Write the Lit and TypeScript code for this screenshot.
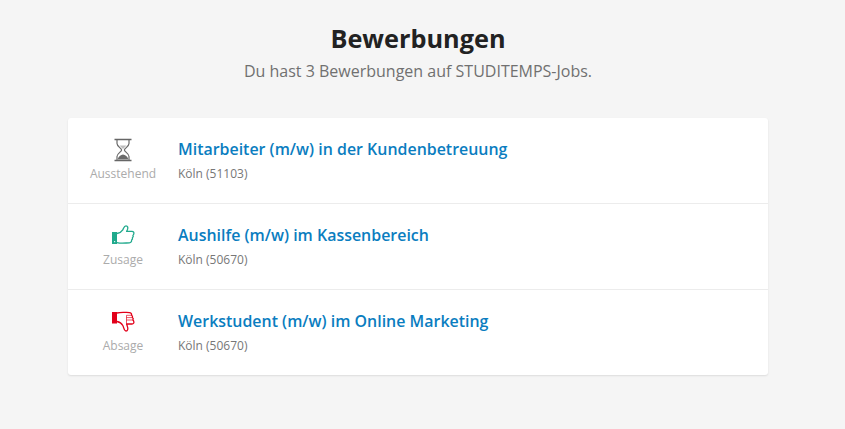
import { LitElement, html, css, svg } from "lit";
import { customElement } from "lit/decorators.js";

const hourglass = svg`<svg width="20" height="24" viewBox="0 0 20 24" fill="none">
  <path d="M1.5 1.5H18.5M1.5 22.5H18.5" stroke="#666" stroke-width="1.7"/>
  <path d="M4 2V5.5C4 8.5 8.6 10.2 8.6 12C8.6 13.8 4 15.5 4 18.5V22M16 2V5.5C16 8.5 11.4 10.2 11.4 12C11.4 13.8 16 15.5 16 18.5V22" stroke="#6a6a6a" stroke-width="1.2"/>
  <path d="M6.5 7.5H13.5L10 11Z" fill="#bdbdbd"/>
  <path d="M4.8 21.5C5 18.5 8 16.8 10 16.5C12 16.8 15 18.5 15.2 21.5Z" fill="#6a6a6a"/>
</svg>`;

const thumbUp = svg`<svg width="24" height="21" viewBox="0 0 24 21" fill="none">
  <rect x="1" y="7" width="5" height="12" fill="#1fa98c"/>
  <rect x="3" y="16" width="1.2" height="1.2" fill="#d5f0ea"/>
  <path d="M6 8.5C8.5 8 10.5 6.8 11.8 4.8C12.8 3.2 13 0.8 15 0.8C16.8 0.8 17.2 2.6 16.5 4.4L15.6 6.4H21C22.5 6.4 23.2 7.6 22.8 8.8C22.6 9.6 22.3 10 21.9 10.4C22.4 11.1 22.2 12.2 21.4 12.8C21.7 13.6 21.4 14.6 20.6 15.1C20.8 16.4 20 17.8 18.4 17.8C15 17.8 11 18.8 6 17.6" stroke="#1fa98c" stroke-width="1.3" stroke-linejoin="round"/>
</svg>`;

const thumbDown = svg`<svg width="24" height="21" viewBox="0 0 24 21" fill="none">
  <rect x="1" y="1" width="5" height="11.5" fill="#e2001a"/>
  <path d="M6 10.5C8.5 11 10.5 12.2 11.8 14.5C12.8 16.2 13 20 15 20C16.8 20 17.2 17.6 16.5 15.8L15.6 13H21C22.5 13 23.2 11.8 22.8 10.6C22.6 9.8 22.3 9.4 21.9 9C22.4 8.3 22.2 7.2 21.4 6.6C21.7 5.8 21.4 4.8 20.6 4.3C20.8 3 20 1.6 18.4 1.6C15 1.6 11 0.7 6 2" stroke="#e2001a" stroke-width="1.3" stroke-linejoin="round"/>
  <path d="M15.5 9H21.9M15.5 6.6H21.4M15.5 4.3H20.6M15.5 13V4.3" stroke="#e2001a" stroke-width="0.9" opacity="0.75"/>
</svg>`;

const items = [
  { icon: hourglass, status: "Ausstehend", title: "Mitarbeiter (m/w) in der Kundenbetreuung", place: "Köln (51103)" },
  { icon: thumbUp, status: "Zusage", title: "Aushilfe (m/w) im Kassenbereich", place: "Köln (50670)" },
  { icon: thumbDown, status: "Absage", title: "Werkstudent (m/w) im Online Marketing", place: "Köln (50670)" },
];

@customElement("app-root")
export class AppRoot extends LitElement {
  static styles = css`
    :host {
      display: block;
      min-height: 429px;
      background: #f5f5f5;
      font-family: "Open Sans", sans-serif;
      overflow: hidden;
      padding-right: 9px;
    }
    .head {
      text-align: center;
      padding-top: 20px;
    }
    h1 {
      margin: 0;
      font-size: 25.3px;
      line-height: 36px;
      font-weight: 700;
      color: #222;
    }
    .sub {
      margin: 0;
      font-size: 16px;
      line-height: 24px;
      color: #707070;
      margin-top: 3px;
    }
    .card {
      width: 700px;
      margin: 35px auto 0;
      background: #fff;
      border-radius: 3px;
      box-shadow: 0 1px 2px rgba(0, 0, 0, 0.1);
    }
    .row {
      display: flex;
      height: 85px;
      border-bottom: 1px solid #ececec;
    }
    .row:last-child {
      border-bottom: none;
    }
    .status {
      width: 110px;
      display: flex;
      flex-direction: column;
      align-items: center;
      padding-top: 19px;
      box-sizing: border-box;
    }
    .ico {
      height: 25px;
      display: flex;
      align-items: center;
      justify-content: center;
    }
    .label {
      font-size: 12px;
      line-height: 16px;
      color: #ababab;
      margin-top: 4px;
    }
    .body {
      padding-top: 19px;
    }
    .title {
      font-size: 15.95px;
      line-height: 24px;
      font-weight: 600;
      color: #0a7dc0;
    }
    .place {
      font-size: 12px;
      line-height: 16px;
      color: #777;
      margin-top: 5px;
    }
  `;

  render() {
    return html`
      <div class="head">
        <h1>Bewerbungen</h1>
        <p class="sub">Du hast 3 Bewerbungen auf STUDITEMPS-Jobs.</p>
      </div>
      <div class="card">
        ${items.map(
          (i) => html`<div class="row">
            <div class="status">
              <div class="ico">${i.icon}</div>
              <div class="label">${i.status}</div>
            </div>
            <div class="body">
              <div class="title">${i.title}</div>
              <div class="place">${i.place}</div>
            </div>
          </div>`
        )}
      </div>
    `;
  }
}
